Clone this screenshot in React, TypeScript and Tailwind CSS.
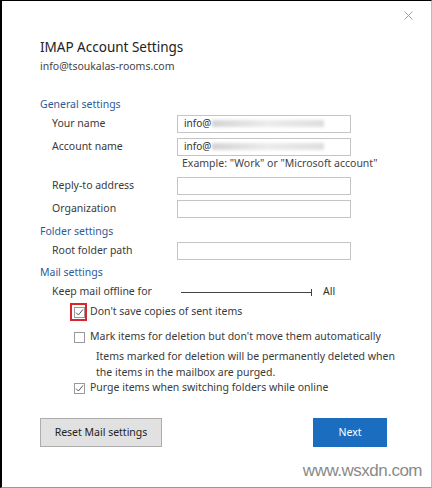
import React from "react"

const font = { fontFamily: '"Noto Sans", "Open Sans", sans-serif' }

function Field({ label, value }: { label: string; value?: string }) {
  return (
    <div className="flex items-center h-[17px]">
      <span className="w-[137px] pl-[12px] text-[10.5px] text-[#3a3a3a] whitespace-nowrap">{label}</span>
      <div className="w-[174px] h-[18px] border border-[#c4c4c4] bg-white flex items-center px-[6px] text-[10px] text-[#333]">
        {value && (
          <>
            <span>{value}</span>
            <span className="ml-[1px] h-[7px] w-[112px] bg-gradient-to-r from-[#d4d4d4] via-[#ececec] to-[#dedede] blur-[1.5px]" />
          </>
        )}
      </div>
    </div>
  )
}

function Heading({ children }: { children: React.ReactNode }) {
  return <div className="text-[10.5px] text-[#2d5b9a] leading-[16px]">{children}</div>
}

function Check({ checked, highlight, label }: { checked: boolean; highlight?: boolean; label: string }) {
  return (
    <div className="flex items-center h-[16px]">
      <div className="relative w-[11px] h-[11px] mr-[5px]">
        <div className="w-[11px] h-[11px] border border-[#9a9a9a] bg-white flex items-center justify-center">
          {checked && (
            <svg width="9" height="9" viewBox="0 0 9 9">
              <path d="M1 4.6 L3.4 7 L8 1.4" fill="none" stroke="#555" strokeWidth="1" />
            </svg>
          )}
        </div>
        {highlight && <div className="absolute -left-[4px] -top-[4px] w-[17px] h-[18px] border-2 border-[#d9262e]" />}
      </div>
      <span className="text-[10.5px] text-[#3a3a3a] whitespace-nowrap">{label}</span>
    </div>
  )
}

export default function App() {
  return (
    <div className="w-[432px] h-[488px] bg-white relative overflow-hidden" style={font}>
      <div className="absolute inset-0 border-t border-l-2 border-black border-r border-r-[#bbb] border-b border-b-[#999] pointer-events-none" />
      <div className="flex justify-end pt-[11px] pr-[19px] h-[20px]">
        <svg width="9" height="9" viewBox="0 0 9 9">
          <path d="M0.5 0.5 L8.5 8.5 M8.5 0.5 L0.5 8.5" stroke="#a0a0a0" strokeWidth="1" />
        </svg>
      </div>
      <div className="pl-[40px] pr-[40px]">
        <div className="mt-[17px] text-[13.5px] leading-[20px] text-[#222] whitespace-nowrap">IMAP Account Settings</div>
        <div className="mt-[1px] text-[10.5px] text-[#444] leading-[16px]">info@tsoukalas-rooms.com</div>

        <div className="mt-[22px]">
          <Heading>General settings</Heading>
        </div>
        <div className="mt-[3px] flex flex-col gap-[6px]">
          <Field label="Your name" value="info@" />
          <Field label="Account name" value="info@" />
        </div>
        <div className="pl-[142px] text-[10.5px] leading-[16px] text-[#444] whitespace-nowrap">Example: "Work" or "Microsoft account"</div>
        <div className="mt-[6px] flex flex-col gap-[6px]">
          <Field label="Reply-to address" />
          <Field label="Organization" />
        </div>

        <div className="mt-[6px]">
          <Heading>Folder settings</Heading>
        </div>
        <div className="mt-[3px]">
          <Field label="Root folder path" />
        </div>

        <div className="mt-[5px]">
          <Heading>Mail settings</Heading>
        </div>
        <div className="mt-[4px] flex items-center h-[16px]">
          <span className="w-[141px] pl-[12px] text-[10.5px] text-[#3a3a3a] whitespace-nowrap">Keep mail offline for</span>
          <div className="w-[130px] h-[1px] bg-[#444]" />
          <div className="w-[1px] h-[7px] bg-[#444]" />
          <span className="ml-[11px] text-[10.5px] text-[#333]">All</span>
        </div>
        <div className="mt-[4px] pl-[34px] flex flex-col">
          <Check checked highlight label="Don't save copies of sent items" />
          <div className="mt-[9px]">
            <Check checked={false} label="Mark items for deletion but don't move them automatically" />
          </div>
          <div className="mt-[3px] pl-[22px] text-[10.5px] leading-[16px] text-[#3a3a3a] whitespace-nowrap">
            Items marked for deletion will be permanently deleted when
            <br />
            the items in the mailbox are purged.
          </div>
          <Check checked label="Purge items when switching folders while online" />
        </div>

        <div className="mt-[22px] flex justify-between pr-[5px]">
          <button className="w-[122px] h-[29px] bg-[#e1e1e1] border border-[#adadad] text-[10.5px] text-[#222]">Reset Mail settings</button>
          <button className="w-[74px] h-[29px] bg-[#1a6dbf] text-[10.5px] text-white">Next</button>
        </div>
      </div>
      <div className="absolute right-[10px] bottom-[5px] text-[17px] tracking-[-0.5px] text-[#8a8a8a]" style={{ fontFamily: '"Liberation Sans", sans-serif' }}>
        www.wsxdn.com
      </div>
    </div>
  )
}
